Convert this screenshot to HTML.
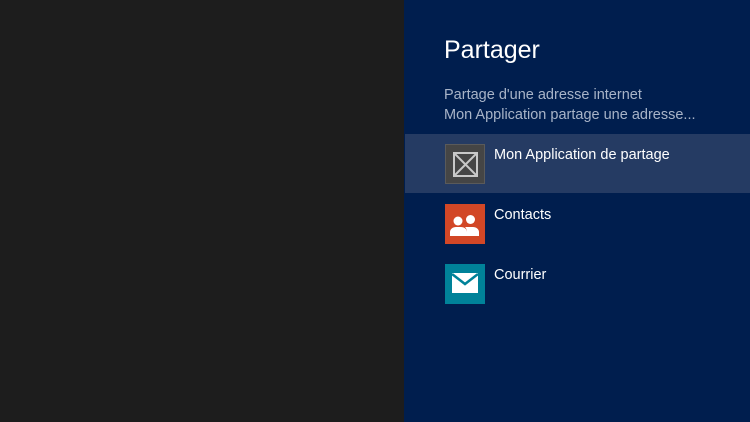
<!DOCTYPE html>
<html><head><meta charset="utf-8"><style>
*{margin:0;padding:0;box-sizing:border-box}
body{width:750px;height:422px;background:#1d1d1d;font-family:"Liberation Sans",sans-serif;position:relative;overflow:hidden}
#p{position:absolute;left:404px;top:0;width:346px;height:422px;background:#001e4e}
h1{position:absolute;left:40px;top:36px;font-weight:normal;font-size:25px;color:#fff}
.s{position:absolute;left:40px;font-size:14.5px;color:#a8b4c8}
.row{position:absolute;left:1px;width:345px;height:59px}
.ic{position:absolute;left:41px;width:40px;height:40px}
.t{position:absolute;left:90px;font-size:14.5px;color:#fff}
</style></head><body>
<div id="p">
<h1>Partager</h1>
<div class="s" style="top:87px">Partage d'une adresse internet</div>
<div class="s" style="top:107px">Mon Application partage une adresse...</div>
<div class="row" style="top:134px;background:#253b63"></div>
<div class="ic" style="top:144px;background:#454545;border:1px solid #5a5a5a">
<svg width="38" height="38" style="position:absolute;left:0;top:0"><g stroke="#c8c8c8" stroke-width="2" fill="none"><rect x="8" y="8" width="23" height="23"/><path d="M8 8L31 31M31 8L8 31"/></g></svg></div>
<div class="t" style="top:147px">Mon Application de partage</div>
<div class="ic" style="top:204px;background:#d24726">
<svg width="40" height="40"><g fill="#fff"><circle cx="13" cy="17" r="4.5"/><path d="M5 32v-4c0-3 3-5 6-5h5c3 0 6 2 6 5v4z"/><circle cx="25.5" cy="15.5" r="4.5"/><path d="M22 32v-4c0-2-1-4-2-5h8c3 0 6 2 6 5v4z"/></g></svg></div>
<div class="t" style="top:207px">Contacts</div>
<div class="ic" style="top:264px;background:#008299">
<svg width="40" height="40"><path d="M7 9h26v20H7z" fill="#fff"/><path d="M7 10l13 10 13-10" stroke="#008299" stroke-width="2.5" fill="none"/></svg></div>
<div class="t" style="top:267px">Courrier</div>
</div>
</body></html>
